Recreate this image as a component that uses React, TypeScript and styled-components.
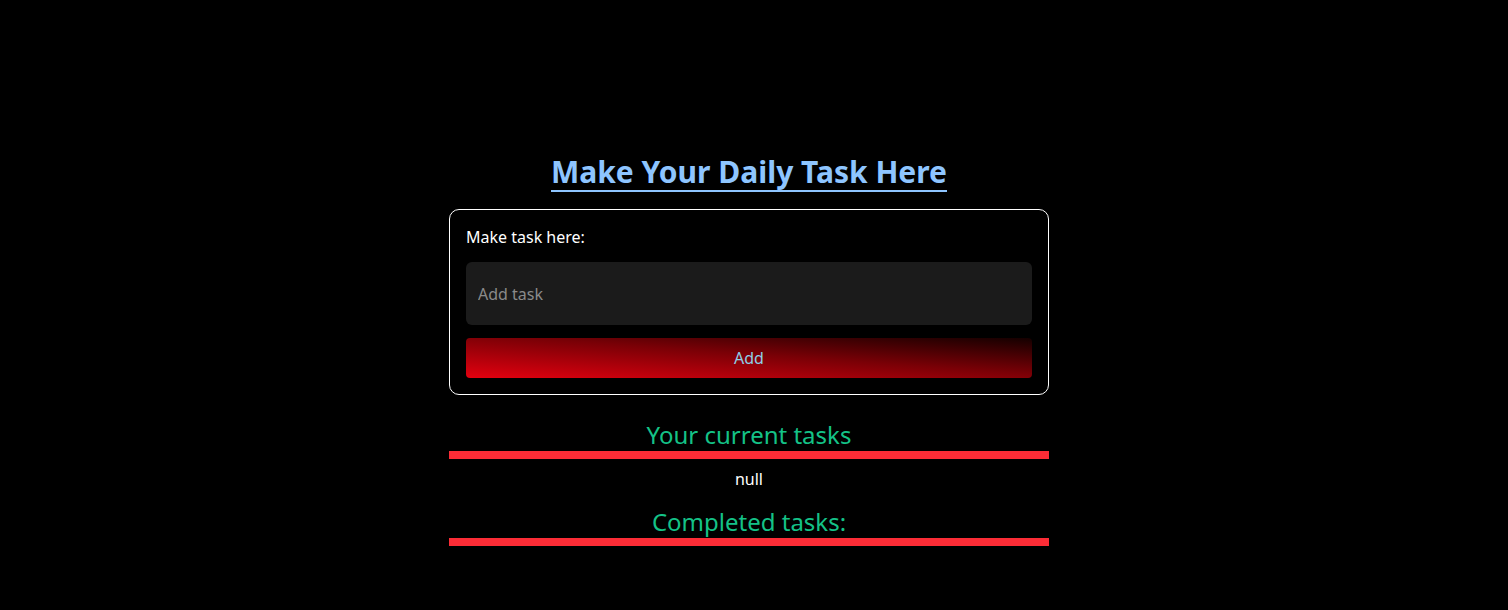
import React from "react";
import styled, { createGlobalStyle } from "styled-components";

const Global = createGlobalStyle`
  html, body { margin: 0; padding: 0; background: #000; }
  body { font-family: "Noto Sans", "Open Sans", sans-serif; color: #fff; }
  * { box-sizing: border-box; }
`;

const Page = styled.main`
  min-height: 610px;
  display: flex;
  flex-direction: column;
  align-items: center;
  padding-top: 151px;
  padding-right: 10px;
`;

const Title = styled.h1`
  margin: 0 0 17px;
  font-size: 30px;
  line-height: 41px;
  font-weight: 700;
  color: #8ec5ff;
  text-decoration: underline;
  text-decoration-thickness: 2px;
  text-underline-offset: 7px;
  text-decoration-skip-ink: none;
`;

const Column = styled.div`
  width: 600px;
  display: flex;
  flex-direction: column;
`;

const Card = styled.form`
  border: 1px solid #fff;
  border-radius: 10px;
  padding: 16px 16px 16px;
  display: flex;
  flex-direction: column;
`;

const Label = styled.label`
  font-size: 16px;
  line-height: 22px;
  margin-bottom: 14px;
`;

const Input = styled.input`
  height: 63px;
  border: none;
  outline: none;
  border-radius: 6px;
  background: #1b1b1b;
  color: #fff;
  padding: 0 12px;
  font-family: inherit;
  font-size: 16px;
  margin-bottom: 13px;
  &::placeholder { color: #8a8a8a; }
`;

const AddButton = styled.button`
  height: 40px;
  border: none;
  border-radius: 4px;
  background: linear-gradient(to top right, #e3000f, #7a0006 55%, #140000);
  color: #8ecfe8;
  font-family: inherit;
  font-size: 16px;
  cursor: pointer;
`;

const Heading = styled.h2<{ $top: number }>`
  margin: ${(p) => p.$top}px 0 0;
  font-size: 24px;
  line-height: 33px;
  font-weight: 400;
  color: #14c287;
  text-align: center;
  border-bottom: 8px solid #fb2c36;
`;

const Empty = styled.p`
  margin: 9px 0 0;
  text-align: center;
  font-size: 16px;
  line-height: 22px;
  color: #fff;
`;

export default function App() {
  return (
    <>
      <Global />
      <Page>
        <Title>Make Your Daily Task Here</Title>
        <Column>
          <Card onSubmit={(e) => e.preventDefault()}>
            <Label htmlFor="task">Make task here:</Label>
            <Input id="task" placeholder="Add task" />
            <AddButton type="submit">Add</AddButton>
          </Card>
          <Heading $top={23}>Your current tasks</Heading>
          <Empty>null</Empty>
          <Heading $top={15}>Completed tasks:</Heading>
        </Column>
      </Page>
    </>
  );
}
